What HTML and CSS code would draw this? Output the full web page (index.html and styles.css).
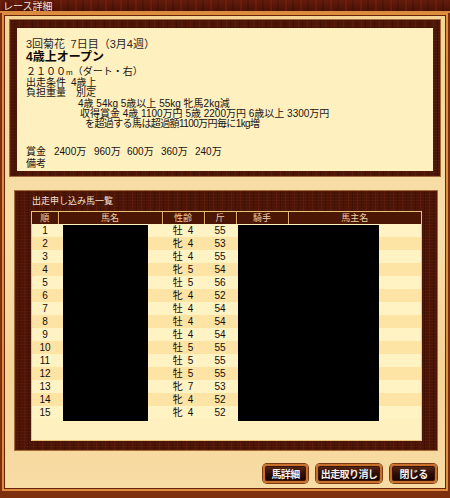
FILE: index.html
```html
<!DOCTYPE html>
<html lang="ja">
<head>
<meta charset="utf-8">
<title>レース詳細</title>
<link rel="stylesheet" href="styles.css">
</head>
<body>
<div class="window">
  <div class="titlebar">レース詳細</div>
  <div class="body">
    <section class="info">
      <div class="info-inner">
        <p class="l-meet">3回菊花&ensp;7日目（3月4週）</p>
        <p class="l-race">4歳上オープン</p>
        <p class="l-std l-dist">２１００<span class="unit">m</span>（ダート・右）</p>
        <p class="l-std">出走条件&ensp;4歳上</p>
        <p class="l-std">負担重量&ensp;&ensp;別定</p>
        <p class="l-std l-c1">4歳 54kg 5歳以上 55kg 牝馬2kg減</p>
        <p class="l-std l-c2">収得賞金 4歳 1100万円 5歳 2200万円 6歳以上 3300万円</p>
        <p class="l-std l-c3">を超過する馬は超過額1100万円毎に1kg増</p>
        <p class="l-prize"><span class="p-label">賞金</span><span class="p1">2400万</span><span class="p2">960万</span><span class="p3">600万</span><span class="p4">360万</span><span class="p5">240万</span></p>
        <p class="l-note">備考</p>
      </div>
    </section>

    <section class="entries">
      <div class="entries-title">出走申し込み馬一覧</div>
      <div class="table-wrap">
        <table class="entry-table">
          <colgroup>
            <col class="c-no"><col class="c-name"><col class="c-sex"><col class="c-kin"><col class="c-jockey"><col class="c-owner">
          </colgroup>
          <thead>
            <tr><th>順</th><th>馬名</th><th>性齢</th><th>斤</th><th>騎手</th><th>馬主名</th></tr>
          </thead>
          <tbody>
            <tr><td>1</td><td></td><td>牡&ensp;4</td><td>55</td><td></td><td></td></tr>
            <tr><td>2</td><td></td><td>牝&ensp;4</td><td>53</td><td></td><td></td></tr>
            <tr><td>3</td><td></td><td>牡&ensp;4</td><td>55</td><td></td><td></td></tr>
            <tr><td>4</td><td></td><td>牝&ensp;5</td><td>54</td><td></td><td></td></tr>
            <tr><td>5</td><td></td><td>牡&ensp;5</td><td>56</td><td></td><td></td></tr>
            <tr><td>6</td><td></td><td>牝&ensp;4</td><td>52</td><td></td><td></td></tr>
            <tr><td>7</td><td></td><td>牡&ensp;4</td><td>54</td><td></td><td></td></tr>
            <tr><td>8</td><td></td><td>牡&ensp;4</td><td>54</td><td></td><td></td></tr>
            <tr><td>9</td><td></td><td>牡&ensp;4</td><td>54</td><td></td><td></td></tr>
            <tr><td>10</td><td></td><td>牡&ensp;5</td><td>55</td><td></td><td></td></tr>
            <tr><td>11</td><td></td><td>牡&ensp;5</td><td>55</td><td></td><td></td></tr>
            <tr><td>12</td><td></td><td>牡&ensp;5</td><td>55</td><td></td><td></td></tr>
            <tr><td>13</td><td></td><td>牝&ensp;7</td><td>53</td><td></td><td></td></tr>
            <tr><td>14</td><td></td><td>牝&ensp;4</td><td>52</td><td></td><td></td></tr>
            <tr><td>15</td><td></td><td>牝&ensp;4</td><td>52</td><td></td><td></td></tr>
          </tbody>
        </table>
        <div class="redact redact-name"></div>
        <div class="redact redact-people"></div>
      </div>
    </section>

    <div class="buttons">
      <button class="btn btn-detail">馬詳細</button>
      <button class="btn btn-cancel">出走取り消し</button>
      <button class="btn btn-close">閉じる</button>
    </div>
  </div>
</div>
</body>
</html>
```

FILE: styles.css
```css
* { box-sizing: border-box; }
html, body { margin: 0; padding: 0; }
body {
  width: 450px;
  height: 498px;
  overflow: hidden;
  background: #7a2c0c;
  font-family: "Liberation Sans", "Noto Sans CJK JP", sans-serif;
}
p { margin: 0; }

.window {
  width: 450px;
  height: 498px;
  background: #7e300e;
  display: flex;
  flex-direction: column;
}

.titlebar {
  height: 13px;
  flex: none;
  padding: 1px 0 0 3px;
  font-size: 10px;
  line-height: 12px;
  color: #f2e2da;
  background-color: #541607;
  background-image:
    repeating-linear-gradient(90deg, rgba(140, 40, 16, 0.3) 0 2px, transparent 2px 7px, rgba(0, 0, 0, 0.15) 7px 9px, transparent 9px 15px),
    linear-gradient(180deg, #641c0a, #4a1206);
  border-bottom: 2px solid #d98a3c;
}

.body {
  flex: none;
  width: 440px;
  height: 472px;
  margin: 3px 5px 0 5px;
  padding-top: 4px;
  background: linear-gradient(180deg, #f4d595 0%, #f8dea9 45%, #f3d495 75%, #f7dca4 100%);
  box-shadow: 0 0 0 1px #6a2208, 0 0 0 3px #dd8d40;
  display: flex;
  flex-direction: column;
}

/* wood frame shared */
.info, .entries {
  background-color: #4a1406;
  background-image:
    repeating-linear-gradient(90deg, rgba(120, 40, 18, 0.35) 0 1px, transparent 1px 4px, rgba(0, 0, 0, 0.15) 4px 5px, transparent 5px 9px),
    repeating-linear-gradient(0deg, rgba(110, 36, 14, 0.25) 0 1px, transparent 1px 3px);
  box-shadow: 0 0 0 1px #a06a3a;
}

.info {
  margin-left: 5px;
  width: 430px;
  height: 156px;
  padding: 8px 7px 5px 7px;
}
.info-inner {
  height: 143px;
  background: #fff0bf;
  padding: 10px 0 0 9px;
  color: #161313;
  font-size: 10px;
}
.l-meet { font-size: 11px; line-height: 12px; white-space: nowrap; color: #2a2626; }
.l-race { font-size: 12px; line-height: 14px; font-weight: bold; color: #0c0a0a; margin-bottom: 3px; }
.l-std { line-height: 10px; white-space: nowrap; }
.unit { font-size: 8px; }
.l-c1 { margin-top: 1px; padding-left: 52px; }
.l-c2 { padding-left: 54px; }
.l-c3 { padding-left: 59px; letter-spacing: -0.6px; }
.l-prize { margin-top: 17px; line-height: 12px; display: flex; white-space: nowrap; }
.p-label { width: 28px; }
.p1 { width: 40px; }
.p2 { width: 33px; }
.p3 { width: 34px; }
.p4 { width: 34px; }
.l-note { line-height: 12px; }

.entries {
  margin-top: 15px;
  margin-left: 10px;
  width: 422px;
  height: 259px;
  padding: 0 15px 9px 16px;
}
.entries-title {
  height: 20px;
  line-height: 20px;
  padding-left: 1px;
  font-size: 9px;
  color: #f3e4d8;
}
.table-wrap {
  position: relative;
  width: 391px;
  height: 230px;
  background: #fff0bf;
  border: 1px solid #e9c27c;
}
.entry-table {
  width: 389px;
  border-collapse: collapse;
  table-layout: fixed;
  font-size: 10px;
}
.c-no { width: 26px; }
.c-name { width: 104px; }
.c-sex { width: 42px; }
.c-kin { width: 32px; }
.c-jockey { width: 52px; }
.c-owner { width: 133px; }

.entry-table th {
  height: 12px;
  padding: 0;
  font-size: 9px;
  line-height: 12px;
  font-weight: normal;
  color: #efcfa4;
  background: #4c1604;
  border-left: 1px solid #e3b46e;
  box-shadow: inset 1px 0 0 #2a0800;
}
.entry-table th:first-child { border-left: none; box-shadow: none; }
.entry-table td {
  height: 13px;
  padding: 0;
  line-height: 13px;
  text-align: center;
  white-space: nowrap;
  color: #120e0a;
}
.entry-table tbody tr:nth-child(odd) td { background: #fff2c3; }
.entry-table tbody tr:nth-child(even) td { background: #fde3a4; }

.redact {
  position: absolute;
  top: 13px;
  height: 196px;
  background: #000;
}
.redact-name { left: 31px; width: 85px; }
.redact-people { left: 206px; width: 141px; }

.buttons {
  margin-top: 14px;
  padding-right: 8px;
  display: flex;
  justify-content: flex-end;
  gap: 8px;
}
.btn {
  height: 19px;
  padding: 0;
  font-family: "Noto Sans CJK JP", sans-serif;
  font-size: 10px;
  font-weight: bold;
  letter-spacing: -0.6px;
  line-height: 15px;
  white-space: nowrap;
  color: #f4f0ee;
  background: linear-gradient(180deg, #5a2816 0%, #2a0c04 55%, #140402 100%);
  border: 2px solid #c8702e;
  border-radius: 4px;
  box-shadow: 0 0 0 1px #7a3a14, inset 0 0 0 1px #3a1406;
}
.btn-detail { width: 45px; }
.btn-cancel { width: 66px; }
.btn-close { width: 47px; }
```
